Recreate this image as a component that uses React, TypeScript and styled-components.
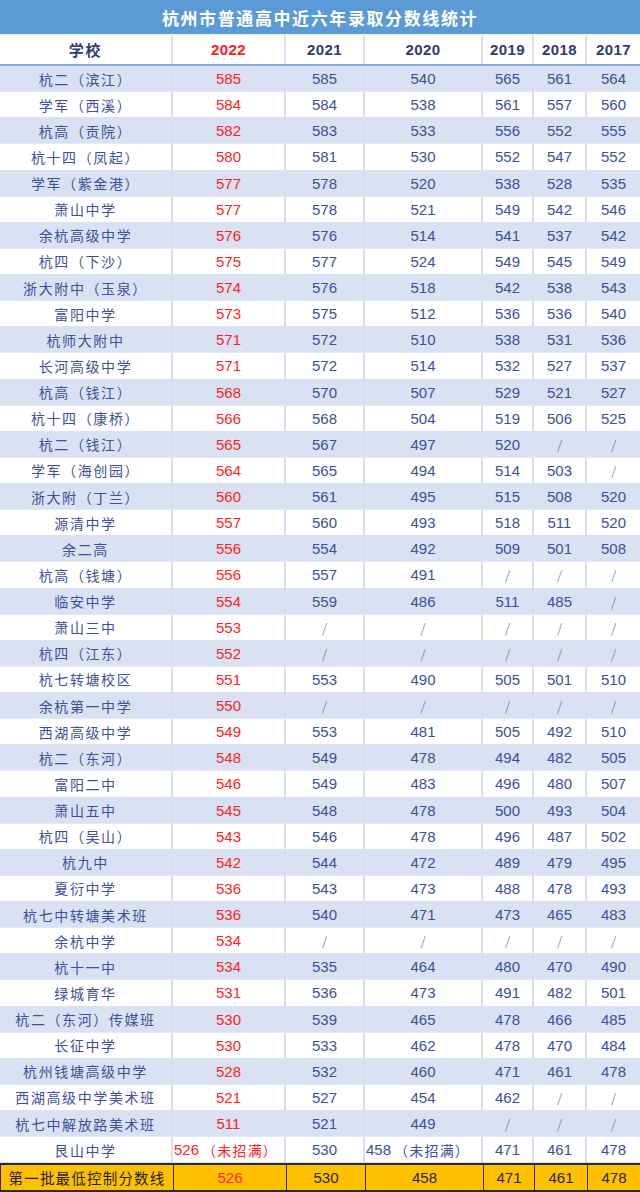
import React from "react";
import styled, { createGlobalStyle } from "styled-components";

const Global = createGlobalStyle`
  html, body { margin: 0; padding: 0; background: #ffffff; }
  body { font-family: "Liberation Sans", "Noto Sans CJK SC", sans-serif; }
  * { box-sizing: border-box; }
`;

const COLS = "173px 113px 79px 118px 51px 53px 53px";

const Page = styled.div`
  width: 640px;
  height: 1192px;
  display: flex;
  flex-direction: column;
  overflow: hidden;
`;

const Title = styled.div`
  height: 35px;
  flex: 0 0 35px;
  background: #5b9bd5;
  color: #ffffff;
  font-family: "Noto Sans CJK SC", sans-serif;
  font-weight: 700;
  font-size: 17px;
  letter-spacing: 1.6px;
  display: flex;
  align-items: center;
  justify-content: center;
  border-bottom: 1px solid #eaf1fa;
`;

const HeaderRow = styled.div`
  flex: 0 0 31px;
  display: grid;
  grid-template-columns: ${COLS};
  background: #ffffff;
  border-bottom: 2px solid #8faadc;
`;

const HeadCell = styled.div<{ $red?: boolean; $last?: boolean }>`
  display: flex;
  align-items: center;
  justify-content: center;
  font-weight: 700;
  font-size: 15px;
  letter-spacing: 0.4px;
  color: ${(p) => (p.$red ? "#ff1a1a" : "#2d3d74")};
  border-right: ${(p) => (p.$last ? "0" : "2px solid #d9e1f2")};
`;

const HeadLabel = styled.span`
  font-family: "Noto Sans CJK SC", sans-serif;
  letter-spacing: 1.8px;
`;

const Body = styled.div`
  flex: 0 0 1097px;
  display: flex;
  flex-direction: column;
`;

const Row = styled.div<{ $shade: boolean }>`
  flex: 1 1 0;
  display: grid;
  grid-template-columns: ${COLS};
  background: ${(p) => (p.$shade ? "#d9e1f2" : "#ffffff")};
  border-bottom: 1px solid ${(p) => (p.$shade ? "#e3e9f5" : "#d9e1f2")};
`;

const Cell = styled.div<{ $red?: boolean; $left?: boolean; $last?: boolean }>`
  display: flex;
  align-items: center;
  justify-content: ${(p) => (p.$left ? "flex-start" : "center")};
  padding-left: ${(p) => (p.$left ? "1px" : "0")};
  font-size: 15px;
  color: ${(p) => (p.$red ? "#ff2323" : "#3d5099")};
  border-right: ${(p) => (p.$last ? "0" : "2px solid #d6deef")};
  white-space: nowrap;
  overflow: visible;
`;

const School = styled.span`
  font-family: "Noto Sans CJK SC", sans-serif;
  font-size: 14px;
  letter-spacing: 1.6px;
  color: #3d5099;
`;

const Note = styled.span`
  font-family: "Noto Sans CJK SC", sans-serif;
  font-size: 14px;
  letter-spacing: 1.2px;
  margin-left: 3px;
`;

const Slash = styled.span`
  font-family: "Noto Sans CJK SC", sans-serif;
  font-weight: 300;
  font-size: 13px;
  color: #5566aa;
`;

const Footer = styled.div`
  flex: 0 0 29px;
  display: grid;
  grid-template-columns: ${COLS};
  background: #ffc000;
  border-top: 2px solid #2a2a2a;
  border-bottom: 2px solid #2a2a2a;
  border-left: 1px solid #2a2a2a;
`;

const FootCell = styled.div<{ $red?: boolean }>`
  display: flex;
  align-items: center;
  justify-content: center;
  font-size: 15px;
  color: ${(p) => (p.$red ? "#ff2323" : "#262626")};
  border-right: 1.5px solid #2a2a2a;
`;

const FootLabel = styled.span`
  font-family: "Noto Sans CJK SC", sans-serif;
  font-size: 14.5px;
  letter-spacing: 1.2px;
  color: #1e1e1e;
`;

type R = [string, string, string, string, string, string, string];

const rows: R[] = [
  ["杭二（滨江）", "585", "585", "540", "565", "561", "564"],
  ["学军（西溪）", "584", "584", "538", "561", "557", "560"],
  ["杭高（贡院）", "582", "583", "533", "556", "552", "555"],
  ["杭十四（凤起）", "580", "581", "530", "552", "547", "552"],
  ["学军（紫金港）", "577", "578", "520", "538", "528", "535"],
  ["萧山中学", "577", "578", "521", "549", "542", "546"],
  ["余杭高级中学", "576", "576", "514", "541", "537", "542"],
  ["杭四（下沙）", "575", "577", "524", "549", "545", "549"],
  ["浙大附中（玉泉）", "574", "576", "518", "542", "538", "543"],
  ["富阳中学", "573", "575", "512", "536", "536", "540"],
  ["杭师大附中", "571", "572", "510", "538", "531", "536"],
  ["长河高级中学", "571", "572", "514", "532", "527", "537"],
  ["杭高（钱江）", "568", "570", "507", "529", "521", "527"],
  ["杭十四（康桥）", "566", "568", "504", "519", "506", "525"],
  ["杭二（钱江）", "565", "567", "497", "520", "/", "/"],
  ["学军（海创园）", "564", "565", "494", "514", "503", "/"],
  ["浙大附（丁兰）", "560", "561", "495", "515", "508", "520"],
  ["源清中学", "557", "560", "493", "518", "511", "520"],
  ["余二高", "556", "554", "492", "509", "501", "508"],
  ["杭高（钱塘）", "556", "557", "491", "/", "/", "/"],
  ["临安中学", "554", "559", "486", "511", "485", "/"],
  ["萧山三中", "553", "/", "/", "/", "/", "/"],
  ["杭四（江东）", "552", "/", "/", "/", "/", "/"],
  ["杭七转塘校区", "551", "553", "490", "505", "501", "510"],
  ["余杭第一中学", "550", "/", "/", "/", "/", "/"],
  ["西湖高级中学", "549", "553", "481", "505", "492", "510"],
  ["杭二（东河）", "548", "549", "478", "494", "482", "505"],
  ["富阳二中", "546", "549", "483", "496", "480", "507"],
  ["萧山五中", "545", "548", "478", "500", "493", "504"],
  ["杭四（吴山）", "543", "546", "478", "496", "487", "502"],
  ["杭九中", "542", "544", "472", "489", "479", "495"],
  ["夏衍中学", "536", "543", "473", "488", "478", "493"],
  ["杭七中转塘美术班", "536", "540", "471", "473", "465", "483"],
  ["余杭中学", "534", "/", "/", "/", "/", "/"],
  ["杭十一中", "534", "535", "464", "480", "470", "490"],
  ["绿城育华", "531", "536", "473", "491", "482", "501"],
  ["杭二（东河）传媒班", "530", "539", "465", "478", "466", "485"],
  ["长征中学", "530", "533", "462", "478", "470", "484"],
  ["杭州钱塘高级中学", "528", "532", "460", "471", "461", "478"],
  ["西湖高级中学美术班", "521", "527", "454", "462", "/", "/"],
  ["杭七中解放路美术班", "511", "521", "449", "/", "/", "/"],
  ["艮山中学", "526（未招满）", "530", "458（未招满）", "471", "461", "478"],
];

const years = ["2022", "2021", "2020", "2019", "2018", "2017"];
const footer = ["526", "530", "458", "471", "461", "478"];

function renderValue(v: string) {
  if (v === "/") return <Slash>/</Slash>;
  const idx = v.indexOf("（");
  if (idx >= 0) {
    return (
      <>
        {v.slice(0, idx)}
        <Note>{v.slice(idx)}</Note>
      </>
    );
  }
  return v;
}

export default function App() {
  return (
    <>
      <Global />
      <Page>
        <Title>杭州市普通高中近六年录取分数线统计</Title>
        <HeaderRow>
          <HeadCell>
            <HeadLabel>学校</HeadLabel>
          </HeadCell>
          {years.map((y, i) => (
            <HeadCell key={y} $red={i === 0} $last={i === years.length - 1}>
              {y}
            </HeadCell>
          ))}
        </HeaderRow>
        <Body>
          {rows.map((r, ri) => (
            <Row key={ri} $shade={ri % 2 === 0}>
              <Cell>
                <School>{r[0]}</School>
              </Cell>
              {r.slice(1).map((v, ci) => (
                <Cell
                  key={ci}
                  $red={ci === 0}
                  $left={v.includes("（")}
                  $last={ci === 5}
                >
                  {renderValue(v)}
                </Cell>
              ))}
            </Row>
          ))}
        </Body>
        <Footer>
          <FootCell>
            <FootLabel>第一批最低控制分数线</FootLabel>
          </FootCell>
          {footer.map((v, i) => (
            <FootCell key={i} $red={i === 0}>
              {v}
            </FootCell>
          ))}
        </Footer>
      </Page>
    </>
  );
}
